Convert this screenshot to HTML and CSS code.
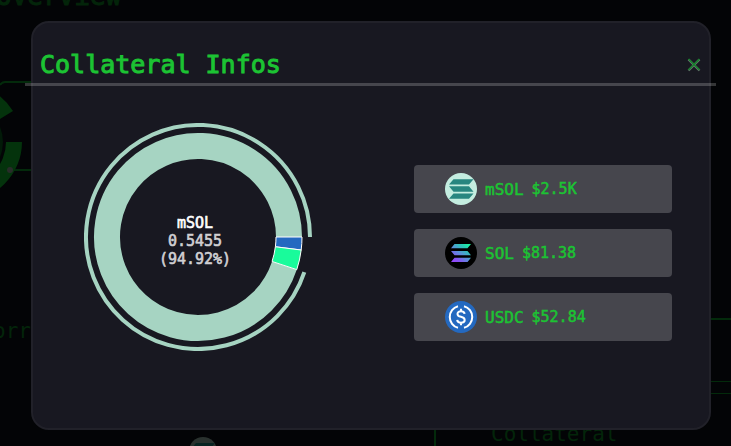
FILE: index.html
```html
<!DOCTYPE html>
<html lang="en">
<head>
<meta charset="utf-8">
<meta name="viewport" content="width=device-width, initial-scale=1">
<title>Collateral Infos</title>
<link rel="stylesheet" href="styles.css">
</head>
<body>
<svg class="backdrop" aria-hidden="true">
  <g class="backdrop-lines">
    <path d="M0 85q2-3 5-3h28" stroke-width="2"/>
    <path d="M12 170h22" stroke-width="2"/>
    <path d="M700 319h31" stroke-width="2"/>
    <path d="M700 381.500h31M700 393.500h31"/>
    <path d="M435 420v26" stroke-width="2"/>
  </g>
  <circle cx="-37" cy="142" r="40" fill="#021a08"/>
  <path d="M22 142A59 59 0 0 1 -37 201V185A43 43 0 0 0 6 142Z" fill="#04330c"/>
  <path d="M-37 83A59 59 0 0 1 13 111L0 119L-37 99Z" fill="#04330c"/>
  <circle cx="10" cy="170" r="3" fill="#292c2a"/>
  <circle cx="203" cy="451" r="14" fill="#29312e"/>
  <path d="M196 443h19l-4 5h-19z" fill="#082422"/>
  <text class="backdrop-heading" x="-4" y="5">overview</text>
  <text class="backdrop-label" x="-7" y="338">orr</text>
  <text class="backdrop-label" x="491" y="441">Collateral</text>
</svg>

<main class="dialog" role="dialog" aria-labelledby="dialog-title">
  <header class="dialog-header">
    <h1 class="dialog-title" id="dialog-title">Collateral Infos</h1>
    <button class="close" type="button" aria-label="Close">
      <svg width="14" height="14" viewBox="0 0 14 14" fill="none">
        <path d="M1.500 1.500l11 11m0-11l-11 11" stroke="#6b716f" stroke-width="2.400"/>
        <path d="M1.500 1l11 11m0-11l-11 11" stroke="#16802c" stroke-width="1.600"/>
      </svg>
    </button>
  </header>

  <div class="dialog-body">
    <svg class="chart" viewBox="-114 -114 228 228" role="img" aria-label="Collateral share">
      <path d="M112 0A112 112 0 1 0 106.340 35.150" fill="none" stroke="#a6d4c2" stroke-width="4"/>
      <path d="M91 0A91 91 0 1 0 86.400 28.560" fill="none" stroke="#a6d4c2" stroke-width="26"/>
      <g stroke="#fff" stroke-width="1">
        <path d="M78 0H104A104 104 0 0 1 103.180 13.030L77.380 9.780A78 78 0 0 0 78 0Z" fill="#2469c0"/>
        <path d="M77.380 9.780L103.180 13.030A104 104 0 0 1 98.750 32.640L74.060 24.480A78 78 0 0 0 77.380 9.780Z" fill="#19fb9b"/>
      </g>
      <g class="chart-text" text-anchor="middle">
        <text class="chart-name" x="-3" y="-9">mSOL</text>
        <text x="-3" y="9">0.5455</text>
        <text x="-3" y="27">(94.92%)</text>
      </g>
    </svg>

    <ul class="tokens">
      <li class="token">
        <svg class="token-icon" viewBox="0 0 32 32" aria-hidden="true">
          <circle cx="16" cy="16" r="16" fill="#c4ede0"/>
          <path d="M8.500 6.200H28.500L24 11.500H4ZM4 13.300H24L28.500 18.700H8.500ZM8.500 20.500H28.500L24 25.800H4Z" fill="#288680"/>
        </svg>
        <span class="token-name">mSOL</span>
        <span class="token-value">$2.5K</span>
      </li>
      <li class="token">
        <svg class="token-icon" viewBox="0 0 32 32" aria-hidden="true">
          <defs>
            <linearGradient id="sol" gradientUnits="userSpaceOnUse" x1="8" y1="26" x2="24" y2="6">
              <stop offset="0" stop-color="#9945ff"/>
              <stop offset=".2" stop-color="#8752f3"/>
              <stop offset=".5" stop-color="#5497d5"/>
              <stop offset=".75" stop-color="#28c9b5"/>
              <stop offset="1" stop-color="#19fb9b"/>
            </linearGradient>
          </defs>
          <circle cx="16" cy="16" r="16" fill="#000"/>
          <path d="M9.500 7H26L22.500 11.200H6ZM6 14H22.500L26 18.200H9.500ZM9.500 20.800H26L22.500 25H6Z" fill="url(#sol)"/>
        </svg>
        <span class="token-name">SOL</span>
        <span class="token-value">$81.38</span>
      </li>
      <li class="token">
        <svg class="token-icon" viewBox="0 0 32 32" aria-hidden="true" fill="none" stroke="#fff" stroke-width="2">
          <circle cx="16" cy="16" r="16" fill="#2469c0" stroke="none"/>
          <path d="M13 5.200A11.200 11.200 0 0 0 13 26.800M19 5.200A11.200 11.200 0 0 1 19 26.800"/>
          <path d="M19.600 12.900C19.400 11.100 18 10.200 16 10.200C13.800 10.200 12.500 11.300 12.500 12.900C12.500 14.700 13.800 15.300 16 15.800C18.300 16.300 19.700 17 19.700 19C19.700 20.800 18.200 21.800 16 21.800C13.800 21.800 12.400 20.800 12.200 18.900M16 7.800V10.200M16 21.800V24.200"/>
        </svg>
        <span class="token-name">USDC</span>
        <span class="token-value">$52.84</span>
      </li>
    </ul>
  </div>
</main>
</body>
</html>
```
FILE: styles.css
```css
* {
  box-sizing: border-box;
}

body {
  margin: 0;
  padding: 21px 20px 16px 31px;
  background: #030406;
  color: #1cc333;
  font-family: "DejaVu Sans Mono", "Liberation Mono", monospace;
  overflow: hidden;
}

.backdrop {
  position: absolute;
  inset: 0;
  width: 100%;
  height: 100%;
}

.backdrop-lines {
  fill: none;
  stroke: #032a0b;
}

.backdrop text {
  fill: #03250a;
  stroke: #03250a;
}

.backdrop-heading {
  font-size: 26px;
}

.backdrop-label {
  font-size: 21px;
  stroke-width: 0;
}

.dialog {
  position: relative;
  border: 2px solid #212129;
  border-radius: 18px;
  background: #181821;
}

.dialog-header {
  display: flex;
  align-items: center;
  justify-content: space-between;
  margin: 0 -7px 0 -8px;
  padding: 24px 15px 0 15px;
  border-bottom: 3px solid rgba(255, 255, 255, 0.2);
}

.dialog-title {
  margin: 0;
  font-size: 25px;
  font-weight: 400;
  line-height: 36px;
  -webkit-text-stroke: 1px currentColor;
}

.close {
  display: flex;
  padding: 0;
  border: 0;
  background: none;
  cursor: pointer;
}

.dialog-body {
  display: flex;
  align-items: center;
  justify-content: space-between;
  padding: 37px 37px 45px 51px;
}

.chart {
  width: 228px;
  margin-bottom: 32px;
}

.chart-text {
  fill: #d0d0d3;
  stroke: #d0d0d3;
  stroke-width: 0.6px;
  font-size: 15px;
}

.chart-name {
  fill: #fff;
  stroke: #fff;
}

.tokens {
  display: grid;
  flex: 0 1 258px;
  gap: 16px;
  margin: 0;
  padding: 0;
  list-style: none;
}

.token {
  display: flex;
  align-items: center;
  gap: 8px;
  padding: 8px 31px;
  border-radius: 4px;
  background: #46464d;
  -webkit-text-stroke: 0.5px currentColor;
}

.token-icon {
  width: 32px;
  height: 32px;
}

.token-name {
  font-size: 16px;
}

.token-value {
  font-size: 15px;
}
```
